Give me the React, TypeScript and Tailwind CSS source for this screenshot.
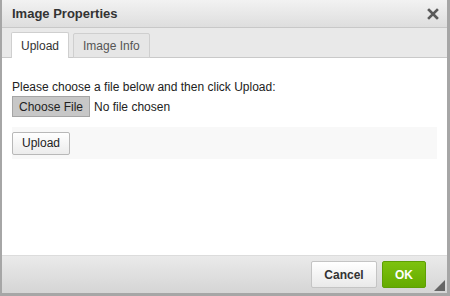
import React from 'react';

export default function App() {
  return (
    <div className="w-[450px] h-[296px] bg-[#a6a6a6] pl-[2px] pr-[3px] pb-[3px] flex flex-col font-['Liberation_Sans',Arial,sans-serif] text-[#222]">
      {/* title bar */}
      <div className="h-[28px] shrink-0 bg-gradient-to-b from-[#f2f2f2] to-[#dedede] border-b border-[#c8c8c8] flex items-center justify-between pl-[10px] pr-[8px]">
        <span className="text-[13px] font-bold text-[#333]">Image Properties</span>
        <svg width="12" height="12" viewBox="0 0 12 12" className="mt-[1px]">
          <path d="M2 2 L10 10 M10 2 L2 10" stroke="#5a5a5a" strokeWidth="2.6" strokeLinecap="square" />
        </svg>
      </div>

      {/* tabs */}
      <div className="h-[30px] shrink-0 bg-[#e9e9e9] border-b border-[#c9c9c9] flex items-end gap-[4px] pl-[9px]">
        <div className="h-[26px] px-[9px] flex items-center bg-white border border-[#cfcfcf] border-b-0 rounded-t-[2px] text-[12px] text-[#333] -mb-px">
          Upload
        </div>
        <div className="h-[25px] px-[9px] flex items-center bg-[#e6e6e6] border border-[#cfcfcf] rounded-t-[2px] text-[12px] text-[#555] -mb-px">
          Image Info
        </div>
      </div>

      {/* content */}
      <div className="flex-1 bg-white px-[10px] pt-[21px]">
        <div className="text-[12px] leading-[16px] text-[#222]">Please choose a file below and then click Upload:</div>
        <div className="flex items-center mt-[1px]">
          <div className="h-[21px] px-[6px] flex items-center bg-[#c7c7c7] border border-[#a5a5a5] text-[12px] text-[#222]">Choose File</div>
          <span className="ml-[4px] text-[12px] text-[#222]">No file chosen</span>
        </div>
        <div className="mt-[10px] h-[32px] w-[425px] bg-[#f8f8f8] flex items-center">
          <div className="h-[23px] px-[9px] flex items-center bg-gradient-to-b from-[#ffffff] to-[#ececec] border border-[#b8b8b8] rounded-[2px] text-[12px] text-[#222]">
            Upload
          </div>
        </div>
      </div>

      {/* footer */}
      <div className="h-[38px] shrink-0 bg-gradient-to-b from-[#eaeaea] to-[#d5d5d5] border-t border-[#dcdcdc] flex items-center justify-end pr-[21px] gap-[5px] relative">
        <div className="h-[27px] w-[66px] flex items-center justify-center bg-gradient-to-b from-white to-[#e9e9e9] border border-[#c4c4c4] rounded-[2px] text-[12px] font-bold text-[#333]">
          Cancel
        </div>
        <div className="h-[27px] w-[44px] flex items-center justify-center bg-gradient-to-b from-[#7dc20f] to-[#65ab00] border border-[#5e9f05] rounded-[2px] text-[12px] font-bold text-white">
          OK
        </div>
        <svg width="11" height="11" viewBox="0 0 11 11" className="absolute right-[2px] bottom-[2px]">
          <path d="M11 0 L11 11 L0 11 Z" fill="#666" />
        </svg>
      </div>
    </div>
  );
}
